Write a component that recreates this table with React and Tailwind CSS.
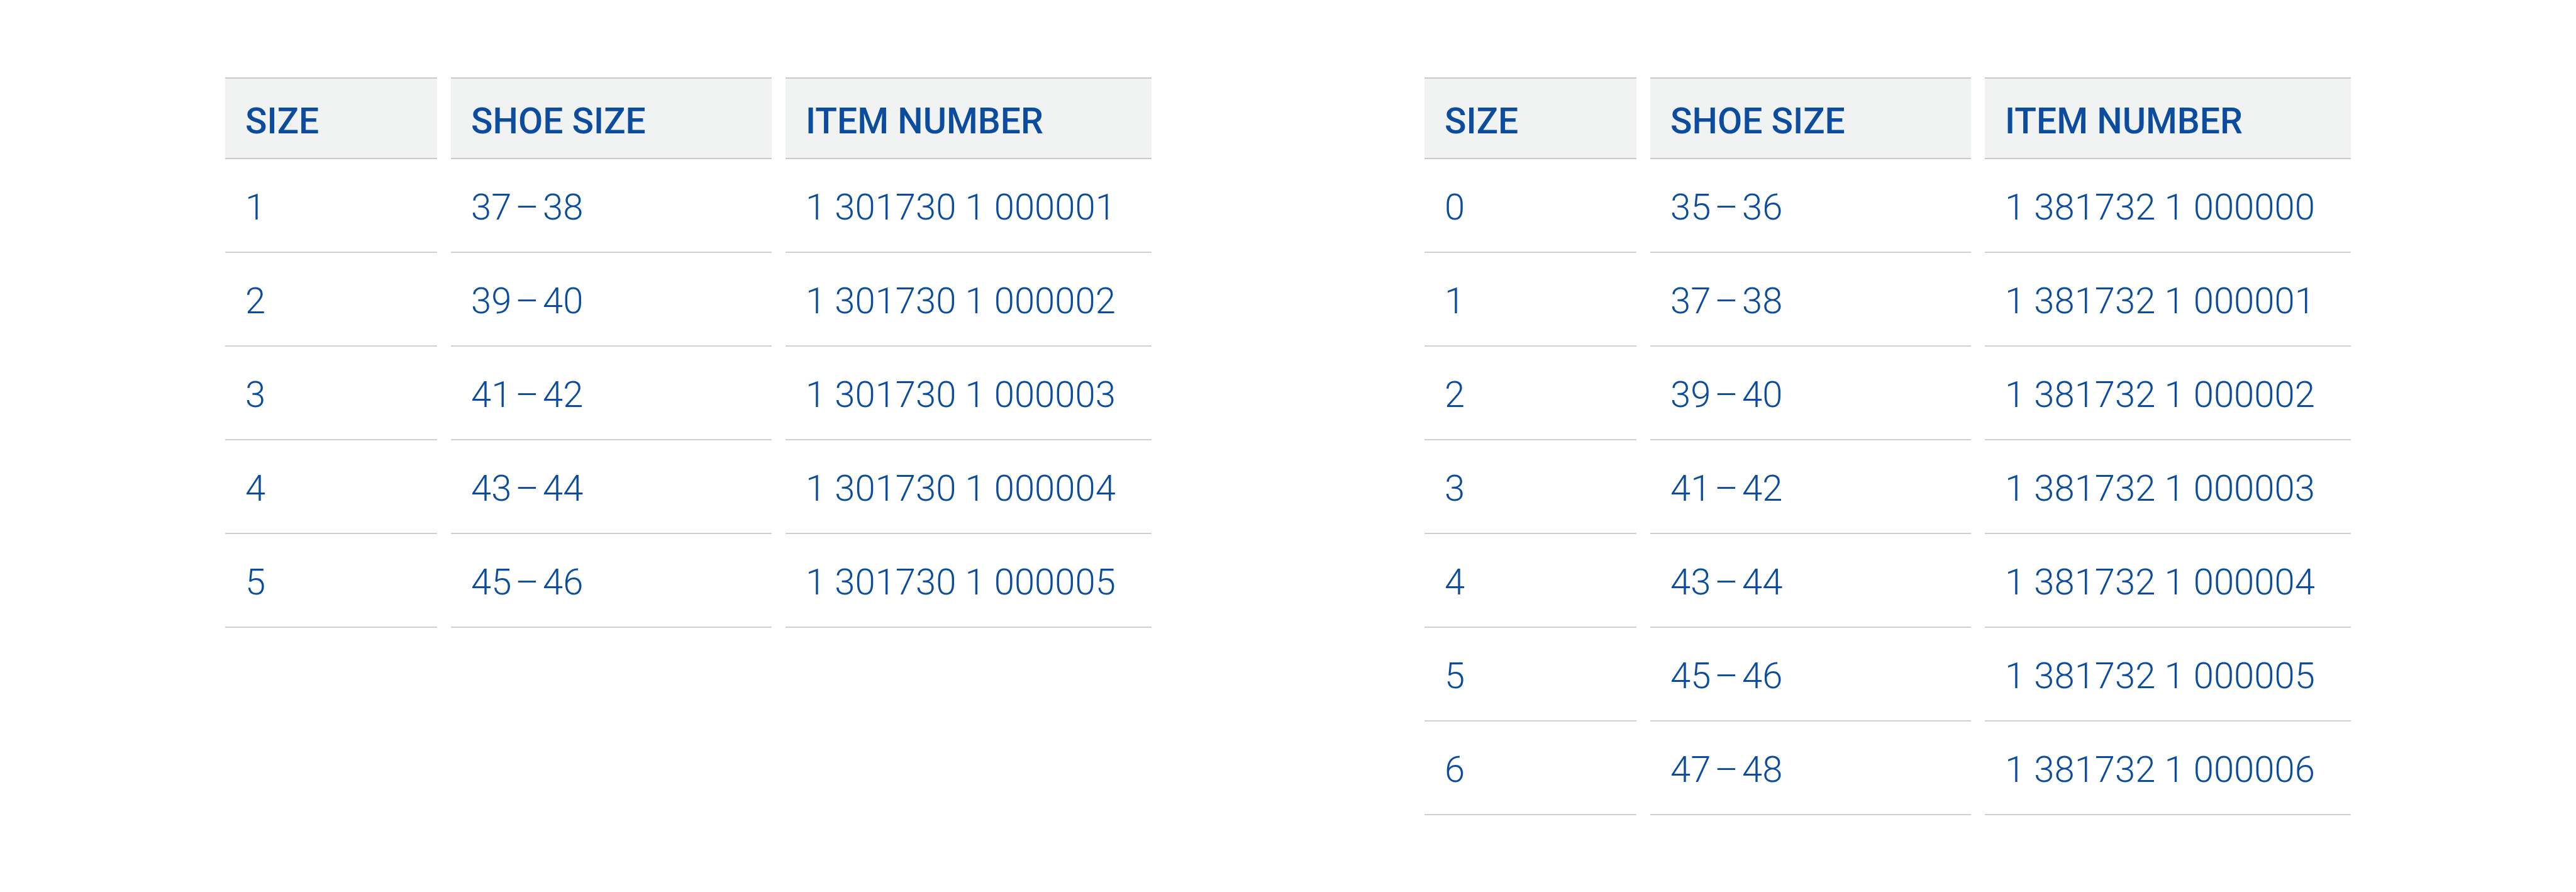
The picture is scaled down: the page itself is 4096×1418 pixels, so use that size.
import React from "react";

const left = [
  ["1", "37\u200a–\u200a38", "1 301730 1 000001"],
  ["2", "39\u200a–\u200a40", "1 301730 1 000002"],
  ["3", "41\u200a–\u200a42", "1 301730 1 000003"],
  ["4", "43\u200a–\u200a44", "1 301730 1 000004"],
  ["5", "45\u200a–\u200a46", "1 301730 1 000005"],
];

const right = [
  ["0", "35\u200a–\u200a36", "1 381732 1 000000"],
  ["1", "37\u200a–\u200a38", "1 381732 1 000001"],
  ["2", "39\u200a–\u200a40", "1 381732 1 000002"],
  ["3", "41\u200a–\u200a42", "1 381732 1 000003"],
  ["4", "43\u200a–\u200a44", "1 381732 1 000004"],
  ["5", "45\u200a–\u200a46", "1 381732 1 000005"],
  ["6", "47\u200a–\u200a48", "1 381732 1 000006"],
];

function Table({ rows }) {
  const heads = ["SIZE", "SHOE SIZE", "ITEM NUMBER"];
  return (
    <div className="grid grid-cols-[337px_510px_582px] gap-x-[22px]">
      {heads.map((h) => (
        <div
          key={h}
          className="h-[130px] flex items-center pl-[32px] pt-[10px] bg-[#f1f2f2] border-t-2 border-b-2 border-[#c9c9c9] text-[57px] font-medium text-[#0c4c9e]"
        >
          {h}
        </div>
      ))}
      {rows.map((r, i) =>
        r.map((c, j) => (
          <div
            key={i + "-" + j}
            className="h-[149px] flex items-center pl-[32px] pt-[6px] border-b-2 border-[#cfcfcf] text-[58px] font-light text-[#0c4c9e]"
          >
            {c}
          </div>
        ))
      )}
    </div>
  );
}

export default function App() {
  return (
    <div
      className="w-full h-[1418px] bg-white flex justify-center items-start gap-[434px] pt-[123px]"
      style={{ fontFamily: "Roboto, 'Liberation Sans', sans-serif" }}
    >
      <Table rows={left} />
      <Table rows={right} />
    </div>
  );
}
